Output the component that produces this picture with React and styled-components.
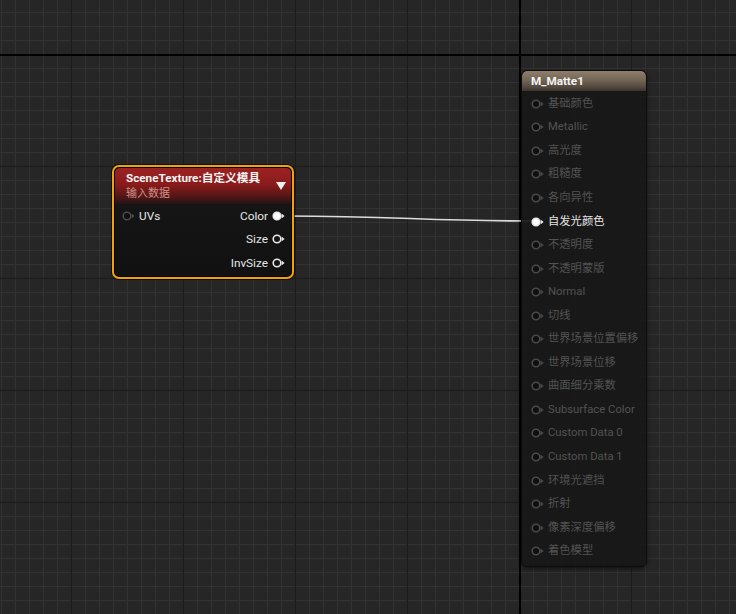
import React from "react";
import styled, { createGlobalStyle } from "styled-components";

const GlobalStyle = createGlobalStyle`
  html, body {
    margin: 0;
    padding: 0;
    background: #262626;
  }
  body {
    font-family: Roboto, "Noto Sans CJK SC", sans-serif;
  }
`;

const Canvas = styled.div`
  position: relative;
  width: 736px;
  height: 614px;
  overflow: hidden;
  background-color: #262626;
  background-image:
    linear-gradient(to right, #000 2px, transparent 2px),
    linear-gradient(to bottom, #000 2px, transparent 2px),
    linear-gradient(to right, #1b1b1b 1px, transparent 1px),
    linear-gradient(to bottom, #1b1b1b 1px, transparent 1px),
    linear-gradient(to right, #323232 1px, transparent 1px),
    linear-gradient(to bottom, #323232 1px, transparent 1px);
  background-size:
    2px 100%,
    100% 2px,
    112px 100%,
    100% 112px,
    14px 100%,
    100% 14px;
  background-position:
    519px 0,
    0 54px,
    71px 0,
    0 54px,
    1px 0,
    0 12px;
  background-repeat: no-repeat, no-repeat, repeat, repeat, repeat, repeat;
`;

const Wires = styled.svg`
  position: absolute;
  left: 0;
  top: 0;
  width: 736px;
  height: 614px;
  pointer-events: none;
`;

// nodes sit on a free canvas, their place is the content
const Node = styled.div`
  position: absolute;
  left: ${(p) => p.$x}px;
  top: ${(p) => p.$y}px;
  width: ${(p) => p.$w}px;
  box-sizing: border-box;
  display: flex;
  flex-direction: column;
  overflow: hidden;
`;

const SelectedNode = styled(Node)`
  border: 2px solid #f2a10b;
  border-radius: 7px;
  background: linear-gradient(#171717, #111);
  box-shadow: 0 0 0 1px rgba(0, 0, 0, 0.6), inset 0 0 0 1px rgba(0, 0, 0, 0.7);
`;

const ResultNode = styled(Node)`
  border: 1px solid #0c0c0c;
  border-radius: 6px;
  background: rgba(24, 24, 24, 0.93);
  box-shadow: 0 2px 4px rgba(0, 0, 0, 0.5);
`;

const RedHeader = styled.div`
  display: flex;
  align-items: center;
  justify-content: space-between;
  height: 36px;
  padding: 1px 5px 0 11px;
  margin: 1px 1px 0;
  box-sizing: border-box;
  border-radius: 5px 5px 0 0;
  background: linear-gradient(#9c2222 0%, #8a1b1b 45%, #5c1616 75%, #241414 100%);
`;

const HeaderText = styled.div`
  display: flex;
  flex-direction: column;
`;

const Title = styled.div`
  font-size: 11.7px;
  font-weight: 700;
  color: #f4f4f4;
  line-height: 15px;
  white-space: nowrap;
`;

const Subtitle = styled.div`
  font-size: 11px;
  color: #cc9288;
  line-height: 16px;
`;

const Dropdown = styled.div`
  width: 0;
  height: 0;
  margin-top: -1px;
  border-left: 5px solid transparent;
  border-right: 5px solid transparent;
  border-top: 8px solid #f0f0f0;
`;

const BrownHeader = styled.div`
  height: 20px;
  display: flex;
  align-items: center;
  padding: 0 9px;
  border-radius: 5px 5px 0 0;
  background: linear-gradient(#8e7f6c 0%, #746655 45%, #4f453b 85%, #3a332d 100%);
`;

const PinRows = styled.div`
  display: flex;
  flex-direction: column;
  padding: ${(p) => p.$pad || "0"};
`;

const Row = styled.div`
  display: flex;
  align-items: center;
  justify-content: ${(p) => (p.$right ? "flex-end" : "flex-start")};
  height: ${(p) => p.$h || 23.5}px;
  gap: ${(p) => p.$gap || 3}px;
`;

const Split = styled.div`
  display: flex;
  justify-content: space-between;
  align-items: center;
`;

const Label = styled.span`
  font-size: ${(p) => p.$size || 11.8}px;
  line-height: 14px;
  white-space: nowrap;
  color: ${(p) => (p.$dim ? "#535353" : "#e6e6e6")};
`;

function Pin({ state }) {
  const ring = state === "dim" ? "#4a4a4a" : "#e8e8e8";
  const fill =
    state === "on" ? "#ffffff" : state === "dim" ? "#0f0f0f" : "#141414";
  return (
    <svg width="14" height="10" viewBox="0 0 14 10">
      <circle cx="5" cy="5" r="3.8" fill={fill} stroke={ring} strokeWidth="1.6" />
      <polygon points="9.6,2.6 12.6,5 9.6,7.4" fill={ring} />
    </svg>
  );
}

const inputs = [
  "基础颜色",
  "Metallic",
  "高光度",
  "粗糙度",
  "各向异性",
  "自发光颜色",
  "不透明度",
  "不透明蒙版",
  "Normal",
  "切线",
  "世界场景位置偏移",
  "世界场景位移",
  "曲面细分乘数",
  "Subsurface Color",
  "Custom Data 0",
  "Custom Data 1",
  "环境光遮挡",
  "折射",
  "像素深度偏移",
  "着色模型",
];

export default function App() {
  return (
    <>
      <GlobalStyle />
      <Canvas>
        <Wires viewBox="0 0 736 614">
          <path
            d="M285 216 C 400 216, 420 221, 533 221"
            fill="none"
            stroke="#dcdcdc"
            strokeWidth="1.6"
          />
        </Wires>

        <SelectedNode $x={112} $y={165} $w={182}>
          <RedHeader>
            <HeaderText>
              <Title>SceneTexture:自定义模具</Title>
              <Subtitle>输入数据</Subtitle>
            </HeaderText>
            <Dropdown />
          </RedHeader>
          <PinRows $pad="0 6px 2px 8px">
            <Split>
              <Row>
                <Pin state="dim" />
                <Label>UVs</Label>
              </Row>
              <Row $right $gap={4}>
                <Label>Color</Label>
                <Pin state="on" />
              </Row>
            </Split>
            <Row $right $gap={4}>
              <Label>Size</Label>
              <Pin state="off" />
            </Row>
            <Row $right $gap={4}>
              <Label>InvSize</Label>
              <Pin state="off" />
            </Row>
          </PinRows>
        </SelectedNode>

        <ResultNode $x={521} $y={70} $w={126}>
          <BrownHeader>
            <Title>M_Matte1</Title>
          </BrownHeader>
          <PinRows $pad="1px 0 3px 9px">
            {inputs.map((name) => {
              const on = name === "自发光颜色";
              return (
                <Row key={name} $h={23.55} $gap={3}>
                  <Pin state={on ? "on" : "dim"} />
                  <Label $dim={!on} $size={11.3}>
                    {name}
                  </Label>
                </Row>
              );
            })}
          </PinRows>
        </ResultNode>
      </Canvas>
    </>
  );
}
